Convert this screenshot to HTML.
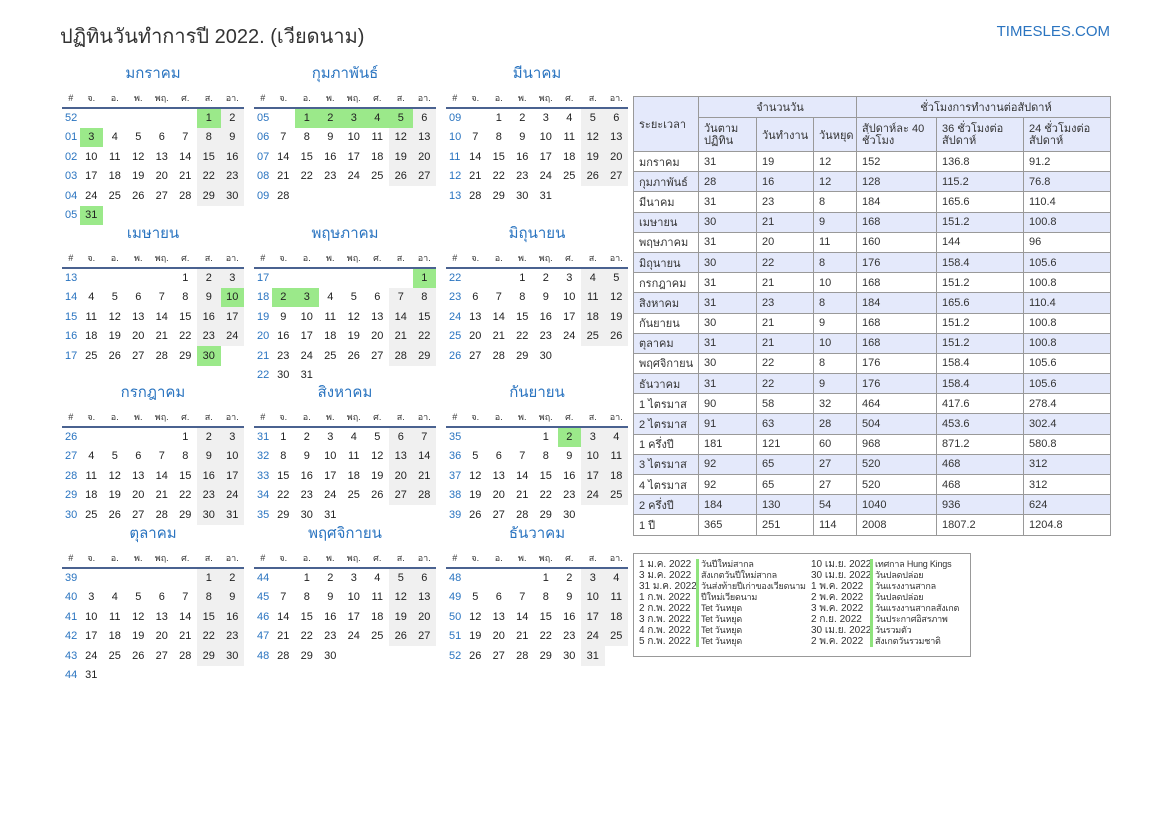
<!DOCTYPE html>
<html><head><meta charset="utf-8"><style>
*{margin:0;padding:0;box-sizing:border-box}
body{width:1169px;height:827px;background:#fff;font-family:"Liberation Sans","Noto Sans CJK SC",sans-serif;color:#222;position:relative;overflow:hidden}
.t{position:absolute;left:60px;top:20px;font-size:20px;color:#333}
.logo{position:absolute;right:59px;top:23px;font-size:15px;color:#2a74c0}
.cal{position:absolute;width:182px}
.cal .h{height:25px;text-align:center;color:#2a74c0;font-size:15px;line-height:19px}
.cal table{border-collapse:collapse;table-layout:fixed;width:182px}
.cal th{font-size:9px;font-weight:normal;height:19px;border-bottom:2px solid #4a6290;color:#333}
.cal td{font-size:11px;height:19.5px;text-align:center;padding:0}
.cal td.n{color:#2a74c0;text-align:left;padding-left:3px}
.w{background:#f0f0f0}.g{background:#9be98a}
.sum{position:absolute;left:633px;top:96px;border-collapse:collapse;table-layout:fixed;width:477px;font-size:11px}
.sum td,.sum th{border:1px solid #999;padding:0 0 0 5px;height:20.2px;text-align:left;font-weight:normal;color:#333}
.sum th{background:#e4e9fb}
.sum th.c{text-align:center}
.sum tr.a td{background:#e4e9fb}
.hol{position:absolute;left:633px;top:553px;width:338px;height:104px;border:1px solid #999;font-size:10px;color:#333}
.hol div{position:absolute;white-space:nowrap;line-height:11px}
.hol div.th{font-size:9px;letter-spacing:-0.2px}
.bar{position:absolute;width:3px;height:10px;background:#8fe37d}
</style></head><body>
<div class="t">ปฏิทินวันทำการปี 2022. (เวียดนาม)</div>
<div class="logo">TIMESLES.COM</div>

<div class="cal" style="left:62px;top:64px"><div class="h">มกราคม</div><table><colgroup><col style="width:17.5px"><col span="7" style="width:23.5px"></colgroup>
<tr><th>#</th><th>จ.</th><th>อ.</th><th>พ.</th><th>พฤ.</th><th>ศ.</th><th>ส.</th><th>อา.</th></tr>
<tr><td class="n">52</td><td></td><td></td><td></td><td></td><td></td><td class="g">1</td><td class="w">2</td></tr>
<tr><td class="n">01</td><td class="g">3</td><td>4</td><td>5</td><td>6</td><td>7</td><td class="w">8</td><td class="w">9</td></tr>
<tr><td class="n">02</td><td>10</td><td>11</td><td>12</td><td>13</td><td>14</td><td class="w">15</td><td class="w">16</td></tr>
<tr><td class="n">03</td><td>17</td><td>18</td><td>19</td><td>20</td><td>21</td><td class="w">22</td><td class="w">23</td></tr>
<tr><td class="n">04</td><td>24</td><td>25</td><td>26</td><td>27</td><td>28</td><td class="w">29</td><td class="w">30</td></tr>
<tr><td class="n">05</td><td class="g">31</td><td></td><td></td><td></td><td></td><td></td><td></td></tr>
</table></div>

<div class="cal" style="left:254px;top:64px"><div class="h">กุมภาพันธ์</div><table><colgroup><col style="width:17.5px"><col span="7" style="width:23.5px"></colgroup>
<tr><th>#</th><th>จ.</th><th>อ.</th><th>พ.</th><th>พฤ.</th><th>ศ.</th><th>ส.</th><th>อา.</th></tr>
<tr><td class="n">05</td><td></td><td class="g">1</td><td class="g">2</td><td class="g">3</td><td class="g">4</td><td class="g">5</td><td class="w">6</td></tr>
<tr><td class="n">06</td><td>7</td><td>8</td><td>9</td><td>10</td><td>11</td><td class="w">12</td><td class="w">13</td></tr>
<tr><td class="n">07</td><td>14</td><td>15</td><td>16</td><td>17</td><td>18</td><td class="w">19</td><td class="w">20</td></tr>
<tr><td class="n">08</td><td>21</td><td>22</td><td>23</td><td>24</td><td>25</td><td class="w">26</td><td class="w">27</td></tr>
<tr><td class="n">09</td><td>28</td><td></td><td></td><td></td><td></td><td></td><td></td></tr>
</table></div>

<div class="cal" style="left:446px;top:64px"><div class="h">มีนาคม</div><table><colgroup><col style="width:17.5px"><col span="7" style="width:23.5px"></colgroup>
<tr><th>#</th><th>จ.</th><th>อ.</th><th>พ.</th><th>พฤ.</th><th>ศ.</th><th>ส.</th><th>อา.</th></tr>
<tr><td class="n">09</td><td></td><td>1</td><td>2</td><td>3</td><td>4</td><td class="w">5</td><td class="w">6</td></tr>
<tr><td class="n">10</td><td>7</td><td>8</td><td>9</td><td>10</td><td>11</td><td class="w">12</td><td class="w">13</td></tr>
<tr><td class="n">11</td><td>14</td><td>15</td><td>16</td><td>17</td><td>18</td><td class="w">19</td><td class="w">20</td></tr>
<tr><td class="n">12</td><td>21</td><td>22</td><td>23</td><td>24</td><td>25</td><td class="w">26</td><td class="w">27</td></tr>
<tr><td class="n">13</td><td>28</td><td>29</td><td>30</td><td>31</td><td></td><td></td><td></td></tr>
</table></div>

<div class="cal" style="left:62px;top:224px"><div class="h">เมษายน</div><table><colgroup><col style="width:17.5px"><col span="7" style="width:23.5px"></colgroup>
<tr><th>#</th><th>จ.</th><th>อ.</th><th>พ.</th><th>พฤ.</th><th>ศ.</th><th>ส.</th><th>อา.</th></tr>
<tr><td class="n">13</td><td></td><td></td><td></td><td></td><td>1</td><td class="w">2</td><td class="w">3</td></tr>
<tr><td class="n">14</td><td>4</td><td>5</td><td>6</td><td>7</td><td>8</td><td class="w">9</td><td class="g">10</td></tr>
<tr><td class="n">15</td><td>11</td><td>12</td><td>13</td><td>14</td><td>15</td><td class="w">16</td><td class="w">17</td></tr>
<tr><td class="n">16</td><td>18</td><td>19</td><td>20</td><td>21</td><td>22</td><td class="w">23</td><td class="w">24</td></tr>
<tr><td class="n">17</td><td>25</td><td>26</td><td>27</td><td>28</td><td>29</td><td class="g">30</td><td></td></tr>
</table></div>

<div class="cal" style="left:254px;top:224px"><div class="h">พฤษภาคม</div><table><colgroup><col style="width:17.5px"><col span="7" style="width:23.5px"></colgroup>
<tr><th>#</th><th>จ.</th><th>อ.</th><th>พ.</th><th>พฤ.</th><th>ศ.</th><th>ส.</th><th>อา.</th></tr>
<tr><td class="n">17</td><td></td><td></td><td></td><td></td><td></td><td></td><td class="g">1</td></tr>
<tr><td class="n">18</td><td class="g">2</td><td class="g">3</td><td>4</td><td>5</td><td>6</td><td class="w">7</td><td class="w">8</td></tr>
<tr><td class="n">19</td><td>9</td><td>10</td><td>11</td><td>12</td><td>13</td><td class="w">14</td><td class="w">15</td></tr>
<tr><td class="n">20</td><td>16</td><td>17</td><td>18</td><td>19</td><td>20</td><td class="w">21</td><td class="w">22</td></tr>
<tr><td class="n">21</td><td>23</td><td>24</td><td>25</td><td>26</td><td>27</td><td class="w">28</td><td class="w">29</td></tr>
<tr><td class="n">22</td><td>30</td><td>31</td><td></td><td></td><td></td><td></td><td></td></tr>
</table></div>

<div class="cal" style="left:446px;top:224px"><div class="h">มิถุนายน</div><table><colgroup><col style="width:17.5px"><col span="7" style="width:23.5px"></colgroup>
<tr><th>#</th><th>จ.</th><th>อ.</th><th>พ.</th><th>พฤ.</th><th>ศ.</th><th>ส.</th><th>อา.</th></tr>
<tr><td class="n">22</td><td></td><td></td><td>1</td><td>2</td><td>3</td><td class="w">4</td><td class="w">5</td></tr>
<tr><td class="n">23</td><td>6</td><td>7</td><td>8</td><td>9</td><td>10</td><td class="w">11</td><td class="w">12</td></tr>
<tr><td class="n">24</td><td>13</td><td>14</td><td>15</td><td>16</td><td>17</td><td class="w">18</td><td class="w">19</td></tr>
<tr><td class="n">25</td><td>20</td><td>21</td><td>22</td><td>23</td><td>24</td><td class="w">25</td><td class="w">26</td></tr>
<tr><td class="n">26</td><td>27</td><td>28</td><td>29</td><td>30</td><td></td><td></td><td></td></tr>
</table></div>

<div class="cal" style="left:62px;top:383px"><div class="h">กรกฎาคม</div><table><colgroup><col style="width:17.5px"><col span="7" style="width:23.5px"></colgroup>
<tr><th>#</th><th>จ.</th><th>อ.</th><th>พ.</th><th>พฤ.</th><th>ศ.</th><th>ส.</th><th>อา.</th></tr>
<tr><td class="n">26</td><td></td><td></td><td></td><td></td><td>1</td><td class="w">2</td><td class="w">3</td></tr>
<tr><td class="n">27</td><td>4</td><td>5</td><td>6</td><td>7</td><td>8</td><td class="w">9</td><td class="w">10</td></tr>
<tr><td class="n">28</td><td>11</td><td>12</td><td>13</td><td>14</td><td>15</td><td class="w">16</td><td class="w">17</td></tr>
<tr><td class="n">29</td><td>18</td><td>19</td><td>20</td><td>21</td><td>22</td><td class="w">23</td><td class="w">24</td></tr>
<tr><td class="n">30</td><td>25</td><td>26</td><td>27</td><td>28</td><td>29</td><td class="w">30</td><td class="w">31</td></tr>
</table></div>

<div class="cal" style="left:254px;top:383px"><div class="h">สิงหาคม</div><table><colgroup><col style="width:17.5px"><col span="7" style="width:23.5px"></colgroup>
<tr><th>#</th><th>จ.</th><th>อ.</th><th>พ.</th><th>พฤ.</th><th>ศ.</th><th>ส.</th><th>อา.</th></tr>
<tr><td class="n">31</td><td>1</td><td>2</td><td>3</td><td>4</td><td>5</td><td class="w">6</td><td class="w">7</td></tr>
<tr><td class="n">32</td><td>8</td><td>9</td><td>10</td><td>11</td><td>12</td><td class="w">13</td><td class="w">14</td></tr>
<tr><td class="n">33</td><td>15</td><td>16</td><td>17</td><td>18</td><td>19</td><td class="w">20</td><td class="w">21</td></tr>
<tr><td class="n">34</td><td>22</td><td>23</td><td>24</td><td>25</td><td>26</td><td class="w">27</td><td class="w">28</td></tr>
<tr><td class="n">35</td><td>29</td><td>30</td><td>31</td><td></td><td></td><td></td><td></td></tr>
</table></div>

<div class="cal" style="left:446px;top:383px"><div class="h">กันยายน</div><table><colgroup><col style="width:17.5px"><col span="7" style="width:23.5px"></colgroup>
<tr><th>#</th><th>จ.</th><th>อ.</th><th>พ.</th><th>พฤ.</th><th>ศ.</th><th>ส.</th><th>อา.</th></tr>
<tr><td class="n">35</td><td></td><td></td><td></td><td>1</td><td class="g">2</td><td class="w">3</td><td class="w">4</td></tr>
<tr><td class="n">36</td><td>5</td><td>6</td><td>7</td><td>8</td><td>9</td><td class="w">10</td><td class="w">11</td></tr>
<tr><td class="n">37</td><td>12</td><td>13</td><td>14</td><td>15</td><td>16</td><td class="w">17</td><td class="w">18</td></tr>
<tr><td class="n">38</td><td>19</td><td>20</td><td>21</td><td>22</td><td>23</td><td class="w">24</td><td class="w">25</td></tr>
<tr><td class="n">39</td><td>26</td><td>27</td><td>28</td><td>29</td><td>30</td><td></td><td></td></tr>
</table></div>

<div class="cal" style="left:62px;top:524px"><div class="h">ตุลาคม</div><table><colgroup><col style="width:17.5px"><col span="7" style="width:23.5px"></colgroup>
<tr><th>#</th><th>จ.</th><th>อ.</th><th>พ.</th><th>พฤ.</th><th>ศ.</th><th>ส.</th><th>อา.</th></tr>
<tr><td class="n">39</td><td></td><td></td><td></td><td></td><td></td><td class="w">1</td><td class="w">2</td></tr>
<tr><td class="n">40</td><td>3</td><td>4</td><td>5</td><td>6</td><td>7</td><td class="w">8</td><td class="w">9</td></tr>
<tr><td class="n">41</td><td>10</td><td>11</td><td>12</td><td>13</td><td>14</td><td class="w">15</td><td class="w">16</td></tr>
<tr><td class="n">42</td><td>17</td><td>18</td><td>19</td><td>20</td><td>21</td><td class="w">22</td><td class="w">23</td></tr>
<tr><td class="n">43</td><td>24</td><td>25</td><td>26</td><td>27</td><td>28</td><td class="w">29</td><td class="w">30</td></tr>
<tr><td class="n">44</td><td>31</td><td></td><td></td><td></td><td></td><td></td><td></td></tr>
</table></div>

<div class="cal" style="left:254px;top:524px"><div class="h">พฤศจิกายน</div><table><colgroup><col style="width:17.5px"><col span="7" style="width:23.5px"></colgroup>
<tr><th>#</th><th>จ.</th><th>อ.</th><th>พ.</th><th>พฤ.</th><th>ศ.</th><th>ส.</th><th>อา.</th></tr>
<tr><td class="n">44</td><td></td><td>1</td><td>2</td><td>3</td><td>4</td><td class="w">5</td><td class="w">6</td></tr>
<tr><td class="n">45</td><td>7</td><td>8</td><td>9</td><td>10</td><td>11</td><td class="w">12</td><td class="w">13</td></tr>
<tr><td class="n">46</td><td>14</td><td>15</td><td>16</td><td>17</td><td>18</td><td class="w">19</td><td class="w">20</td></tr>
<tr><td class="n">47</td><td>21</td><td>22</td><td>23</td><td>24</td><td>25</td><td class="w">26</td><td class="w">27</td></tr>
<tr><td class="n">48</td><td>28</td><td>29</td><td>30</td><td></td><td></td><td></td><td></td></tr>
</table></div>

<div class="cal" style="left:446px;top:524px"><div class="h">ธันวาคม</div><table><colgroup><col style="width:17.5px"><col span="7" style="width:23.5px"></colgroup>
<tr><th>#</th><th>จ.</th><th>อ.</th><th>พ.</th><th>พฤ.</th><th>ศ.</th><th>ส.</th><th>อา.</th></tr>
<tr><td class="n">48</td><td></td><td></td><td></td><td>1</td><td>2</td><td class="w">3</td><td class="w">4</td></tr>
<tr><td class="n">49</td><td>5</td><td>6</td><td>7</td><td>8</td><td>9</td><td class="w">10</td><td class="w">11</td></tr>
<tr><td class="n">50</td><td>12</td><td>13</td><td>14</td><td>15</td><td>16</td><td class="w">17</td><td class="w">18</td></tr>
<tr><td class="n">51</td><td>19</td><td>20</td><td>21</td><td>22</td><td>23</td><td class="w">24</td><td class="w">25</td></tr>
<tr><td class="n">52</td><td>26</td><td>27</td><td>28</td><td>29</td><td>30</td><td class="w">31</td><td></td></tr>
</table></div>

<table class="sum">
<colgroup><col style="width:65px"><col style="width:58px"><col style="width:57px"><col style="width:43px"><col style="width:80px"><col style="width:87px"><col style="width:87px"></colgroup>
<tr><th rowspan="2" style="height:55px">ระยะเวลา</th><th colspan="3" class="c" style="height:21px">จำนวนวัน</th><th colspan="3" class="c">ชั่วโมงการทำงานต่อสัปดาห์</th></tr>
<tr><th style="height:34px;line-height:12px">วันตาม<br>ปฏิทิน</th><th>วันทำงาน</th><th>วันหยุด</th><th style="line-height:12px">สัปดาห์ละ 40<br>ชั่วโมง</th><th style="line-height:12px">36 ชั่วโมงต่อ<br>สัปดาห์</th><th style="line-height:12px">24 ชั่วโมงต่อ<br>สัปดาห์</th></tr>
<tr><td>มกราคม</td><td>31</td><td>19</td><td>12</td><td>152</td><td>136.8</td><td>91.2</td></tr>
<tr class="a"><td>กุมภาพันธ์</td><td>28</td><td>16</td><td>12</td><td>128</td><td>115.2</td><td>76.8</td></tr>
<tr><td>มีนาคม</td><td>31</td><td>23</td><td>8</td><td>184</td><td>165.6</td><td>110.4</td></tr>
<tr class="a"><td>เมษายน</td><td>30</td><td>21</td><td>9</td><td>168</td><td>151.2</td><td>100.8</td></tr>
<tr><td>พฤษภาคม</td><td>31</td><td>20</td><td>11</td><td>160</td><td>144</td><td>96</td></tr>
<tr class="a"><td>มิถุนายน</td><td>30</td><td>22</td><td>8</td><td>176</td><td>158.4</td><td>105.6</td></tr>
<tr><td>กรกฎาคม</td><td>31</td><td>21</td><td>10</td><td>168</td><td>151.2</td><td>100.8</td></tr>
<tr class="a"><td>สิงหาคม</td><td>31</td><td>23</td><td>8</td><td>184</td><td>165.6</td><td>110.4</td></tr>
<tr><td>กันยายน</td><td>30</td><td>21</td><td>9</td><td>168</td><td>151.2</td><td>100.8</td></tr>
<tr class="a"><td>ตุลาคม</td><td>31</td><td>21</td><td>10</td><td>168</td><td>151.2</td><td>100.8</td></tr>
<tr><td>พฤศจิกายน</td><td>30</td><td>22</td><td>8</td><td>176</td><td>158.4</td><td>105.6</td></tr>
<tr class="a"><td>ธันวาคม</td><td>31</td><td>22</td><td>9</td><td>176</td><td>158.4</td><td>105.6</td></tr>
<tr><td>1 ไตรมาส</td><td>90</td><td>58</td><td>32</td><td>464</td><td>417.6</td><td>278.4</td></tr>
<tr class="a"><td>2 ไตรมาส</td><td>91</td><td>63</td><td>28</td><td>504</td><td>453.6</td><td>302.4</td></tr>
<tr><td>1 ครึ่งปี</td><td>181</td><td>121</td><td>60</td><td>968</td><td>871.2</td><td>580.8</td></tr>
<tr class="a"><td>3 ไตรมาส</td><td>92</td><td>65</td><td>27</td><td>520</td><td>468</td><td>312</td></tr>
<tr><td>4 ไตรมาส</td><td>92</td><td>65</td><td>27</td><td>520</td><td>468</td><td>312</td></tr>
<tr class="a"><td>2 ครึ่งปี</td><td>184</td><td>130</td><td>54</td><td>1040</td><td>936</td><td>624</td></tr>
<tr><td>1 ปี</td><td>365</td><td>251</td><td>114</td><td>2008</td><td>1807.2</td><td>1204.8</td></tr>
</table>

<div class="hol">
<div style="left:5px;top:5px">1 ม.ค. 2022<br>3 ม.ค. 2022<br>31 ม.ค. 2022<br>1 ก.พ. 2022<br>2 ก.พ. 2022<br>3 ก.พ. 2022<br>4 ก.พ. 2022<br>5 ก.พ. 2022</div>
<div class="th" style="left:67px;top:5px">วันปีใหม่สากล<br>สังเกตวันปีใหม่สากล<br>วันส่งท้ายปีเก่าของเวียดนาม<br>ปีใหม่เวียดนาม<br>Tet วันหยุด<br>Tet วันหยุด<br>Tet วันหยุด<br>Tet วันหยุด</div>
<div style="left:177px;top:5px">10 เม.ย. 2022<br>30 เม.ย. 2022<br>1 พ.ค. 2022<br>2 พ.ค. 2022<br>3 พ.ค. 2022<br>2 ก.ย. 2022<br>30 เม.ย. 2022<br>2 พ.ค. 2022</div>
<div class="th" style="left:241px;top:5px">เทศกาล Hung Kings<br>วันปลดปล่อย<br>วันแรงงานสากล<br>วันปลดปล่อย<br>วันแรงงานสากลสังเกต<br>วันประกาศอิสรภาพ<br>วันรวมตัว<br>สังเกตวันรวมชาติ</div>
<span class="bar" style="left:62px;top:5px;height:88px"></span>
<span class="bar" style="left:236px;top:5px;height:88px"></span>
</div>
</body></html>
